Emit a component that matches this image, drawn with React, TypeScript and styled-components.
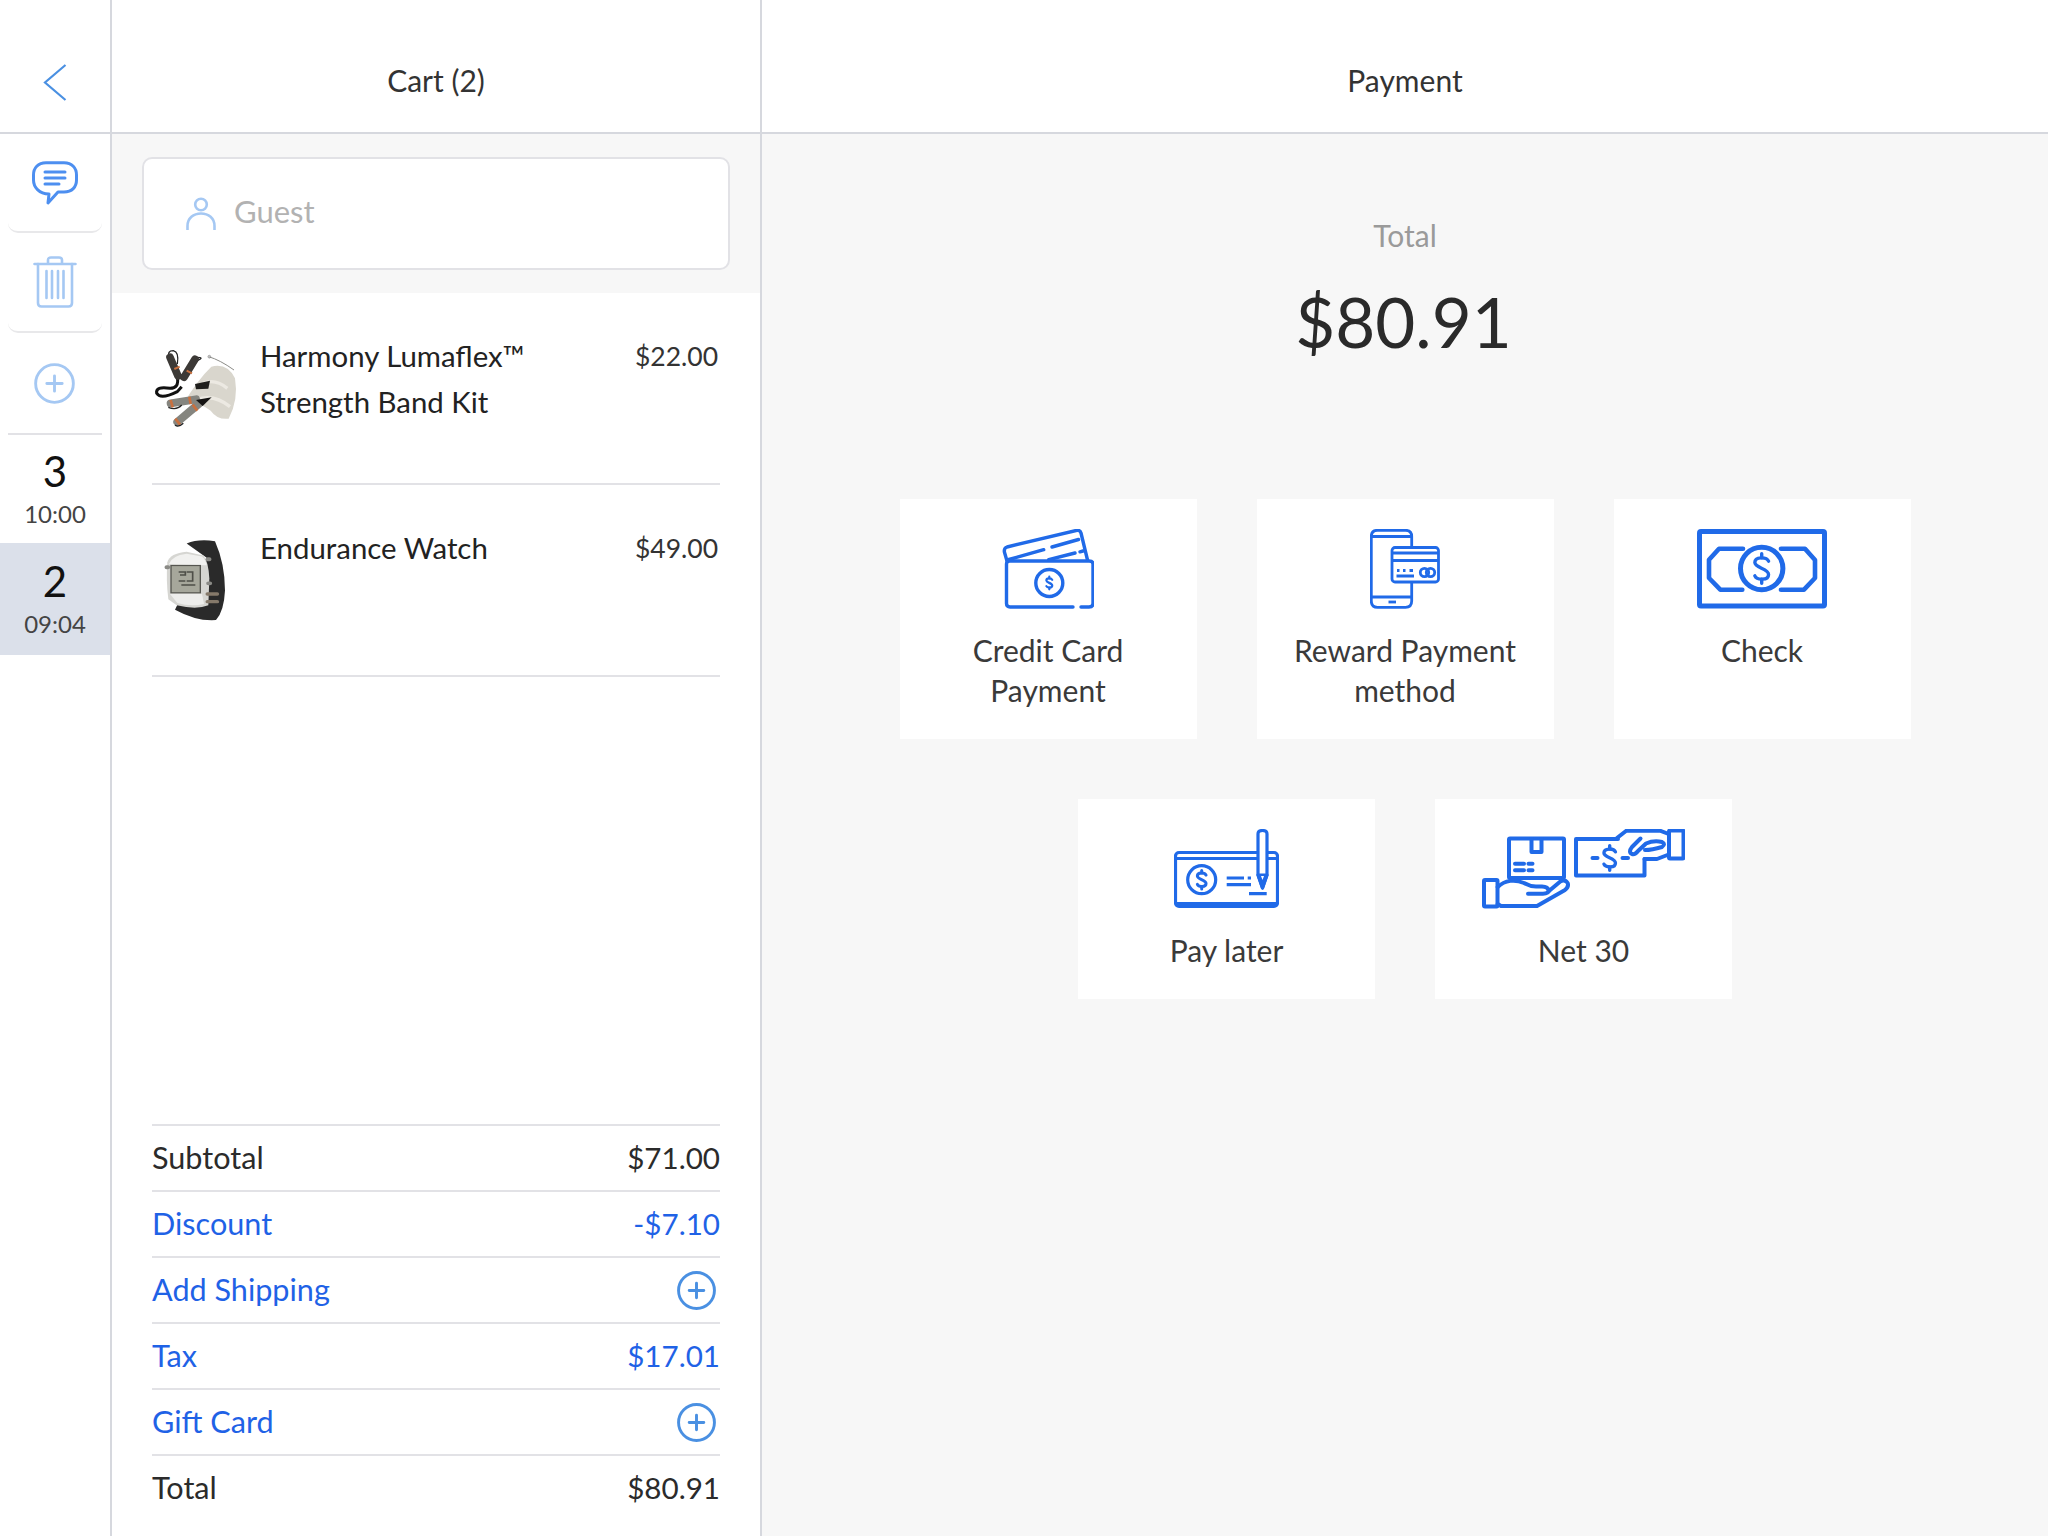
import React from "react";
import styled, { createGlobalStyle } from "styled-components";

const BLUE = "#206ae8";
const SOFT_BLUE = "#4a90e2";
const PALE_BLUE = "#a5c8f3";
const LINE = "#d6d8de";
const ROW_LINE = "#e2e2e6";

const GlobalStyle = createGlobalStyle`
  html, body { margin: 0; padding: 0; background: #fff; }
  body { font-family: "Lato", "Open Sans", sans-serif; color: #333; }
`;

const Page = styled.div`
  display: flex;
  width: 2048px;
  height: 1536px;
  overflow: hidden;
`;

const Rail = styled.aside`
  width: 110px;
  flex: none;
  border-right: 2px solid ${LINE};
  display: flex;
  flex-direction: column;
`;

const CartPane = styled.section`
  width: 648px;
  flex: none;
  border-right: 2px solid ${LINE};
  display: flex;
  flex-direction: column;
`;

const PaymentPane = styled.section`
  flex: 1;
  display: flex;
  flex-direction: column;
  background: #f7f7f7;
`;

const Header = styled.header`
  height: 134px;
  flex: none;
  box-sizing: border-box;
  padding-top: 28px;
  border-bottom: 2px solid ${LINE};
  background: #fff;
  display: flex;
  align-items: center;
  justify-content: center;
  font-size: 30px;
  color: #333;
`;

const BackButton = styled.div`
  display: flex;
  margin-top: 5px;
`;

const ActionCell = styled.div<{ $h: number }>`
  height: ${({ $h }) => $h}px;
  margin: 0 8px;
  box-sizing: border-box;
  border-bottom: 2px solid #e8e8ea;
  border-radius: 0 0 10px 10px;
  display: flex;
  align-items: center;
  justify-content: center;
`;

const AddCell = styled.div`
  height: 102px;
  margin: 0 8px;
  padding-right: 2px;
  box-sizing: border-box;
  border-bottom: 2px solid #e2e2e6;
  display: flex;
  align-items: center;
  justify-content: center;
`;

const Order = styled.div<{ $active?: boolean }>`
  height: ${({ $active }) => ($active ? 112 : 108)}px;
  box-sizing: border-box;
  background: ${({ $active }) => ($active ? "#dbe0ea" : "transparent")};
  display: flex;
  flex-direction: column;
  align-items: center;
  justify-content: center;
  gap: 6px;
`;

const OrderNumber = styled.div`
  font-size: 42px;
  line-height: 44px;
  color: #111;
`;

const OrderTime = styled.div`
  font-size: 24px;
  line-height: 30px;
  color: #444;
`;

const GuestStrip = styled.div`
  background: #f7f7f7;
  padding: 23px 30px;
`;

const GuestBox = styled.div`
  height: 113px;
  box-sizing: border-box;
  background: #fff;
  border: 2px solid #e2e2e6;
  border-radius: 10px;
  padding-left: 42px;
  display: flex;
  align-items: center;
  gap: 18px;
`;

const GuestName = styled.span`
  margin-bottom: 6px;
  font-size: 31px;
  color: #b2b2b2;
`;

const CartBody = styled.div`
  flex: 1;
  display: flex;
  flex-direction: column;
  padding: 0 40px 16px 40px;
  background: #fff;
`;

const Items = styled.div`
  flex: 1;
`;

const Item = styled.div`
  height: 192px;
  box-sizing: border-box;
  border-bottom: 2px solid ${ROW_LINE};
  padding-top: 27px;
  display: grid;
  grid-template-columns: 108px 1fr auto;
  align-items: start;
`;

const ItemTitle = styled.div`
  margin-top: 13px;
  font-size: 29.4px;
  line-height: 46px;
  color: #222;
`;

const ItemPrice = styled.div`
  margin-top: 13px;
  padding-right: 2px;
  font-size: 26.5px;
  line-height: 46px;
  color: #333;
`;

const Summary = styled.div`
  display: flex;
  flex-direction: column;
`;

const SummaryRow = styled.div<{ $link?: boolean }>`
  height: 66px;
  box-sizing: border-box;
  padding-bottom: 2px;
  border-top: 2px solid ${ROW_LINE};
  display: flex;
  align-items: center;
  justify-content: space-between;
  font-size: 30.6px;
  color: ${({ $link }) => ($link ? "#1f62e6" : "#2b2b2b")};
`;

const Amount = styled.span`
  font-size: 29.6px;
`;

const RowPlus = styled.span`
  display: flex;
  margin: 2px 4px 0 0;
`;

const TotalLabel = styled.div`
  padding-top: 81px;
  font-size: 30px;
  color: #9a9a9a;
  text-align: center;
  line-height: 40px;
`;

const TotalAmount = styled.div`
  margin-top: 27px;
  padding-right: 3px;
  font-size: 69px;
  line-height: 80px;
  color: #2a2a2a;
  text-align: center;
`;

const Methods = styled.div`
  width: 1020px;
  margin: 0 auto;
  padding-top: 137px;
  display: flex;
  flex-wrap: wrap;
  justify-content: center;
  gap: 60px;
`;

const Method = styled.button`
  width: 297px;
  border: 0;
  background: #fff;
  padding: 30px 30px 29px;
  display: flex;
  flex-direction: column;
  align-items: center;
  font-family: inherit;
  font-size: 30px;
  line-height: 40px;
  color: #3a3a3a;
  text-align: center;
`;

const MethodIcon = styled.div`
  height: 80px;
  margin-bottom: 21px;
  display: flex;
  justify-content: center;
`;

const Thumb = styled.svg`
  width: 108px;
  height: 130px;
  display: block;
`;

const ChevronIcon = () => (
  <svg width="24" height="37" viewBox="0 0 24 37" fill="none" stroke={SOFT_BLUE} strokeWidth="2.2">
    <path d="M22.5 1 L2 18.5 L22.5 36" />
  </svg>
);

const ChatIcon = () => (
  <svg width="46" height="44" viewBox="0 0 46 44" fill="none" stroke="#4d8ff0" strokeWidth="3" strokeLinecap="round">
    <path d="M14 1.8 H32 C40 1.8 44.5 7 44.5 14 V19 C44.5 26 40 31 32 31 H26 L16 42 L17 33 C7 33 1.5 26 1.5 19 V14 C1.5 7 6 1.8 14 1.8 Z" strokeLinejoin="round" />
    <path d="M13 11 H33 M13 17 H33 M13 23 H27" />
  </svg>
);

const TrashIcon = () => (
  <svg width="44" height="52" viewBox="0 0 44 52" fill="none" stroke={PALE_BLUE} strokeWidth="2.6" strokeLinecap="round" strokeLinejoin="round">
    <path d="M1.5 8 H42.5 M15 7 V4 Q15 1.5 18 1.5 H26 Q29 1.5 29 4 V7" />
    <path d="M5 8 V47 Q5 50.5 8.5 50.5 H35.5 Q39 50.5 39 47 V8" />
    <path d="M13.5 15 V42 M19 15 V42 M25 15 V42 M30.5 15 V42" />
  </svg>
);

const PlusCircle = ({ size, color, width }: { size: number; color: string; width: number }) => (
  <svg width={size} height={size} viewBox="0 0 40 40" fill="none" stroke={color} strokeWidth={width} strokeLinecap="round">
    <circle cx="20" cy="20" r="18.4" />
    <path d="M20 12.5 V27.5 M12.5 20 H27.5" />
  </svg>
);

const PersonIcon = () => (
  <svg width="30" height="33" viewBox="0 0 30 33" fill="none" stroke={PALE_BLUE} strokeWidth="2.6">
    <circle cx="15" cy="7.5" r="5.8" />
    <path d="M1.5 33 V29 C1.5 21 7.5 16.5 15 16.5 C22.5 16.5 28.5 21 28.5 29 V33" />
  </svg>
);

// dollar sign drawn at 30px tall, scaled to fit each icon
const DollarMark = ({ x, y, scale, width }: { x: number; y: number; scale: number; width: number }) => (
  <g transform={`translate(${x} ${y}) scale(${scale})`} fill="none" stroke={BLUE} strokeWidth={width / scale} strokeLinecap="round">
    <path d="M7 -7.5 C5 -12 -7 -12.5 -7 -6 C-7 -0.5 7 0 7 6 C7 12.5 -5 12 -7 7.5" />
    <path d="M0 -15 V-11 M0 11 V15" />
  </g>
);

const CardIcon = () => (
  <svg width="92" height="80" viewBox="0 0 92 80" fill="none" stroke={BLUE} strokeWidth="3.4" strokeLinecap="round" strokeLinejoin="round">
    <path d="M71 78 H8 Q4.5 78 4.5 74.5 V35 Q4.5 32 8 32 H87 Q91 32 91 35 V74.5 Q91 78 87 78 H79" />
    <path d="M5 32 L2.4 23 Q1.8 19 5 18 L74 1.5 Q78 0.7 79 4 L85.5 31" />
    <path d="M5 31 L41.7 20.7 M50 18 L76.5 10.5 M46.7 30.7 L73 24 M78 22.8 L81 22" />
    <circle cx="47.3" cy="54" r="13.5" />
    <DollarMark x={47.3} y={54} scale={0.42} width={2.2} />
  </svg>
);

const RewardIcon = () => (
  <svg width="70" height="80" viewBox="0 0 70 80" fill="none" stroke={BLUE} strokeWidth="2.8" strokeLinejoin="round">
    <path d="M41.7 18 V7.5 Q41.7 1.3 35.5 1.3 H7.5 Q1.3 1.3 1.3 7.5 V72 Q1.3 78.3 7.5 78.3 H35.5 Q41.7 78.3 41.7 72 V53" />
    <path d="M1.3 7.5 H41.7 M1.3 68 H41.7" />
    <path d="M18.5 73 H26" />
    <rect x="22" y="18.5" width="46.5" height="34.5" rx="3" fill="#fff" />
    <path d="M22 24 H68.5 M22 31.5 H68.5" />
    <path d="M27 41.5 H29.5 M33 41.5 H35.5 M39.5 41.5 H43 M26.5 47 H44" />
    <circle cx="54.5" cy="43.5" r="4.2" />
    <circle cx="60.5" cy="43.5" r="4.2" />
  </svg>
);

const CashIcon = () => (
  <svg width="130" height="80" viewBox="0 0 130 80" fill="none" stroke={BLUE} strokeWidth="5" strokeLinejoin="round">
    <rect x="2.5" y="2.5" width="125" height="74.5" rx="1.5" />
    <path d="M46 19.7 H22 L12 30.7 V49 L23.3 60.7 H45.3" strokeWidth="4.6" strokeLinecap="round" />
    <path d="M84 19.7 H108 L118 31 V49 L107 60.7 H84" strokeWidth="4.6" strokeLinecap="round" />
    <circle cx="64.7" cy="39.5" r="21.2" />
    <DollarMark x={64.7} y={39.5} scale={0.98} width={3.4} />
  </svg>
);

const ChequeIcon = () => (
  <svg width="105" height="80" viewBox="0 0 105 80" fill="none" stroke={BLUE} strokeWidth="3.2" strokeLinejoin="round">
    <rect x="1.5" y="23.5" width="102" height="54" rx="3.5" />
    <path d="M1.5 29.5 H103.5 M1.5 74.5 H103.5" />
    <circle cx="27.7" cy="50.7" r="14" />
    <DollarMark x={27.7} y={50.7} scale={0.62} width={3} />
    <path d="M52.7 49 H70 M73.7 49 H77 M52.7 55.7 H77 M75 64.7 H92.7" />
    <path d="M84 46 V5 Q84 1.5 88.5 1.5 Q93 1.5 93 5 V46 L88.5 59 Z" fill="#fff" />
    <path d="M84 46 L93 46 L88.5 59 Z" fill={BLUE} />
    <path d="M87 47 H90 L88.5 51 Z" fill="#fff" stroke="none" />
  </svg>
);

const NetIcon = () => (
  <svg width="203" height="80" viewBox="0 0 203 80" fill="none" stroke={BLUE} strokeWidth="4" strokeLinecap="round" strokeLinejoin="round">
    {/* parcel in hand */}
    <rect x="27" y="9.5" width="55" height="39.5" rx="1" />
    <path d="M49.5 10 V23 H59.5 V10" />
    <path d="M33 34.7 H42 M46.5 34.7 H50.5 M33 41.3 H42 M46.5 41.3 H50.5" />
    <rect x="2" y="51" width="13.5" height="26.5" rx="1" />
    <path d="M15.7 58 C23 51 33 50 42 54 Q48 57.5 54 57.5 H60 Q66 57.5 67 62 L78.3 52.5 Q83 50 85.7 54 Q87 58 83 61 L55 77 H19 L15.7 75" />
    <path d="M46 64.7 H61 Q66.5 64.7 67 61" />
    {/* bill and paying hand */}
    <path d="M136 10 H94 V46.5 H162.5 V30" />
    <path d="M135 9 L144.3 1.7 H178 L186.7 5 M186.7 25.5 L175 30 H162.5" />
    <rect x="187" y="1.5" width="14.5" height="28" rx="1" />
    <path d="M150 18 L158.5 9.5 M150 18 Q146 23 150 25 Q153 26 156 22 L164 14.5 Q172 11 180 13 Q184 15 180 18 Q170 21 163 21" />
    <path d="M110.5 29 H115.5 M140.5 29 H146" />
    <DollarMark x={127.7} y={29} scale={0.82} width={3.4} />
  </svg>
);

const BandKit = () => (
  <Thumb viewBox="36 0 324 390" fill="none">
    <path d="M130 252 Q172 180 214 140 Q262 128 285 175 Q296 240 266 296 Q232 300 212 272 Q172 240 130 252 Z" fill="#d9d6cd" />
    <path d="M190 190 Q225 175 262 205 M170 240 Q220 220 270 260" stroke="#ece9e2" strokeWidth="10" />
    <path d="M206 110 Q240 120 282 150" stroke="#8c8c88" strokeWidth="3" />
    <circle cx="208" cy="110" r="4" stroke="#777" strokeWidth="2" />
    <path d="M88 112 Q80 92 100 92 Q118 96 112 132 M172 122 Q195 112 170 112" stroke="#222" strokeWidth="4" />
    <path d="M112 172 Q118 205 90 205 Q46 198 50 220 Q62 240 112 215 L125 200" stroke="#111" strokeWidth="9" />
    <path d="M90 112 L114 168 M165 118 L132 172" stroke="#3c3936" strokeWidth="23" strokeLinecap="round" />
    <path d="M103 147 L119 140 M140 152 L156 160" stroke="#c8703f" strokeWidth="6" />
    <path d="M165 192 L210 182 L205 206 L168 208 Z" fill="#1f1e1c" />
    <path d="M92 250 L168 238" stroke="#85857f" strokeWidth="24" strokeLinecap="round" />
    <path d="M112 306 L178 250" stroke="#85857f" strokeWidth="24" strokeLinecap="round" />
    <path d="M92 240 L98 262 M148 230 L152 252 M106 296 L120 314 M158 254 L172 272" stroke="#c9703f" strokeWidth="8" />
    <path d="M168 240 L215 232 L188 258 Z" fill="#141312" />
    <path d="M85 262 Q110 272 125 255 M105 315 Q115 324 130 310" stroke="#222" strokeWidth="4" />
  </Thumb>
);

const WatchPic = () => (
  <Thumb viewBox="36 576 324 390" fill="none">
    <g transform="translate(0 660) scale(1 0.89) translate(0 -660)">
      <path d="M140 672 Q175 655 225 664 Q255 740 255 830 Q252 900 228 930 Q170 935 105 895 L120 860 L200 720 Z" fill="#2a2a2a" />
      <path d="M82 735 Q90 705 140 700 L190 712 Q205 730 208 790 L205 880 Q170 896 110 880 L85 860 Q78 800 82 735 Z" fill="#d6d6d2" />
      <path d="M86 742 Q95 712 140 706 L186 716 Q198 728 200 745 Z" fill="#f1f1ef" />
      <path d="M90 842 H186 L192 876 Q150 886 112 872 Z" fill="#ededeb" />
      <rect x="93" y="746" width="88" height="92" fill="#a6a79b" stroke="#55554f" strokeWidth="4" />
      <path d="M116 768 H136 V778 H120 M140 768 H158 V798 H140 M116 798 H136 M124 812 H166" stroke="#4e4f48" strokeWidth="5" />
      <path d="M80 752 H84 M203 725 H208 M205 806 H210" stroke="#8a8a86" strokeWidth="13" strokeLinecap="round" />
      <path d="M202 842 H232 M202 868 H232" stroke="#85796a" strokeWidth="11" strokeLinecap="round" />
    </g>
  </Thumb>
);

const App = () => {
  return (
    <Page>
      <GlobalStyle />
      <Rail>
        <Header>
          <BackButton>
            <ChevronIcon />
          </BackButton>
        </Header>
        <ActionCell $h={99}>
          <ChatIcon />
        </ActionCell>
        <ActionCell $h={100}>
          <TrashIcon />
        </ActionCell>
        <AddCell>
          <PlusCircle size={41} color={PALE_BLUE} width={2.8} />
        </AddCell>
        <Order>
          <OrderNumber>3</OrderNumber>
          <OrderTime>10:00</OrderTime>
        </Order>
        <Order $active>
          <OrderNumber>2</OrderNumber>
          <OrderTime>09:04</OrderTime>
        </Order>
      </Rail>

      <CartPane>
        <Header>Cart (2)</Header>
        <GuestStrip>
          <GuestBox>
            <PersonIcon />
            <GuestName>Guest</GuestName>
          </GuestBox>
        </GuestStrip>
        <CartBody>
          <Items>
            <Item>
              <BandKit />
              <ItemTitle>
                Harmony Lumaflex™
                <br />
                Strength Band Kit
              </ItemTitle>
              <ItemPrice>$22.00</ItemPrice>
            </Item>
            <Item>
              <WatchPic />
              <ItemTitle>Endurance Watch</ItemTitle>
              <ItemPrice>$49.00</ItemPrice>
            </Item>
          </Items>
          <Summary>
            <SummaryRow>
              <span>Subtotal</span>
              <Amount>$71.00</Amount>
            </SummaryRow>
            <SummaryRow $link>
              <span>Discount</span>
              <Amount>-$7.10</Amount>
            </SummaryRow>
            <SummaryRow $link>
              <span>Add Shipping</span>
              <RowPlus>
                <PlusCircle size={39} color={SOFT_BLUE} width={3} />
              </RowPlus>
            </SummaryRow>
            <SummaryRow $link>
              <span>Tax</span>
              <Amount>$17.01</Amount>
            </SummaryRow>
            <SummaryRow $link>
              <span>Gift Card</span>
              <RowPlus>
                <PlusCircle size={39} color={SOFT_BLUE} width={3} />
              </RowPlus>
            </SummaryRow>
            <SummaryRow>
              <span>Total</span>
              <Amount>$80.91</Amount>
            </SummaryRow>
          </Summary>
        </CartBody>
      </CartPane>

      <PaymentPane>
        <Header>Payment</Header>
        <TotalLabel>Total</TotalLabel>
        <TotalAmount>$80.91</TotalAmount>
        <Methods>
          <Method>
            <MethodIcon>
              <CardIcon />
            </MethodIcon>
            Credit Card Payment
          </Method>
          <Method>
            <MethodIcon>
              <RewardIcon />
            </MethodIcon>
            Reward Payment method
          </Method>
          <Method>
            <MethodIcon>
              <CashIcon />
            </MethodIcon>
            Check
          </Method>
          <Method>
            <MethodIcon>
              <ChequeIcon />
            </MethodIcon>
            Pay later
          </Method>
          <Method>
            <MethodIcon>
              <NetIcon />
            </MethodIcon>
            Net 30
          </Method>
        </Methods>
      </PaymentPane>
    </Page>
  );
};

export default App;
